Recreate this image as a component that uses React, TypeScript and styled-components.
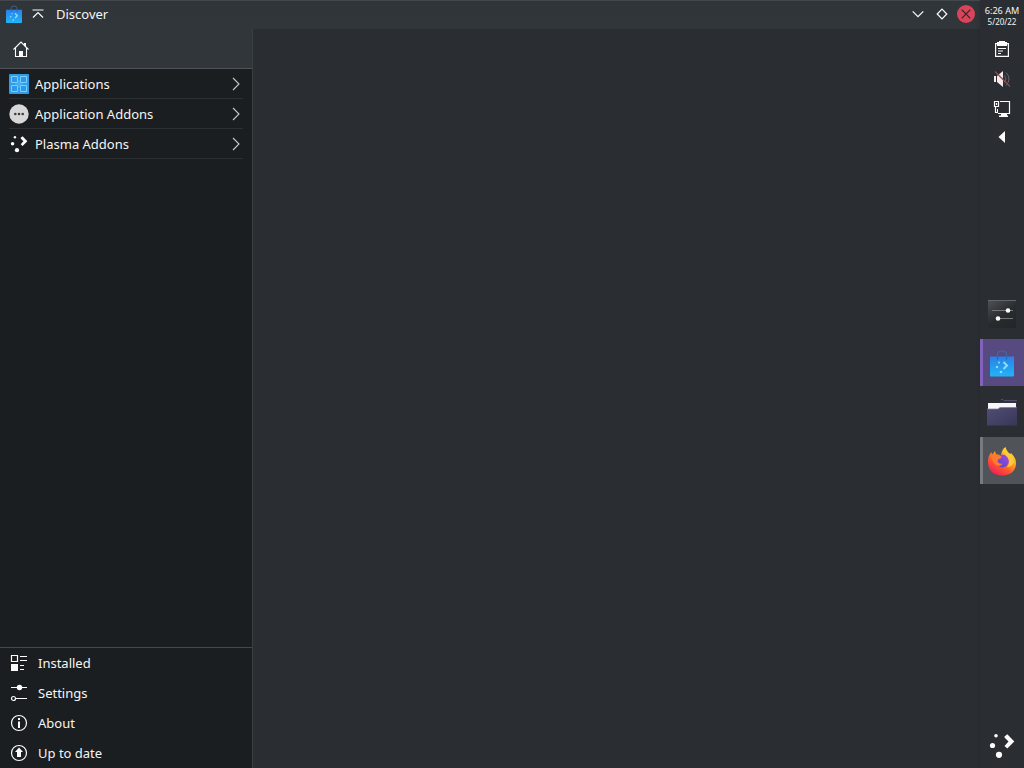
import type { ReactNode } from 'react';
import styled, { createGlobalStyle } from 'styled-components';

const CATEGORIES = [
  { label: 'Applications', icon: <ApplicationsIcon /> },
  { label: 'Application Addons', icon: <AddonsIcon /> },
  { label: 'Plasma Addons', icon: <PlasmaIcon size={19} /> },
];

const ACTIONS = [
  { label: 'Installed', icon: <InstalledIcon /> },
  { label: 'Settings', icon: <SettingsIcon /> },
  { label: 'About', icon: <AboutIcon /> },
  { label: 'Up to date', icon: <UpdateIcon /> },
];

const TASKS: { name: string; state: TaskState; icon: ReactNode }[] = [
  { name: 'settings', state: 'idle', icon: <SystemSettingsIcon /> },
  { name: 'discover', state: 'active', icon: <DiscoverIcon size={30} /> },
  { name: 'files', state: 'idle', icon: <FolderIcon /> },
  { name: 'firefox', state: 'running', icon: <FirefoxIcon /> },
];

type TaskState = 'idle' | 'running' | 'active';

const App = () => (
  <>
    <GlobalStyle />
    <Desktop>
      <Window>
        <TitleBar>
          <DiscoverIcon size={20} />
          <KeepAboveIcon />
          <Title>Discover</Title>
          <WindowButtons>
            <MinimizeIcon />
            <MaximizeIcon />
            <CloseIcon />
          </WindowButtons>
        </TitleBar>
        <WindowBody>
          <Sidebar>
            <SidebarHeader>
              <HomeIcon />
            </SidebarHeader>
            <CategoryList>
              {CATEGORIES.map(({ label, icon }) => (
                <CategoryItem key={label}>
                  {icon}
                  <CategoryLabel>{label}</CategoryLabel>
                  <ChevronIcon />
                </CategoryItem>
              ))}
            </CategoryList>
            <ActionList>
              {ACTIONS.map(({ label, icon }) => (
                <ActionItem key={label}>
                  {icon}
                  <span>{label}</span>
                </ActionItem>
              ))}
            </ActionList>
          </Sidebar>
          <Content />
        </WindowBody>
      </Window>
      <Panel>
        <Clock>
          <Time>6:26 AM</Time>
          <CalendarDate>5/20/22</CalendarDate>
        </Clock>
        <Tray>
          <ClipboardIcon />
          <VolumeIcon />
          <NetworkIcon />
          <ArrowIcon />
        </Tray>
        <TaskList>
          {TASKS.map(({ name, state, icon }) => (
            <Task key={name} $state={state}>
              {icon}
            </Task>
          ))}
        </TaskList>
        <Launcher>
          <PlasmaIcon size={28} />
        </Launcher>
      </Panel>
    </Desktop>
  </>
);

function DiscoverIcon({ size }: { size: number }) {
  return (
    <svg width={size} height={size} viewBox="0 0 30 30">
      <defs>
        <linearGradient id={`bag${size}`} x1="0" y1="0" x2="0" y2="1">
          <stop offset="0" stopColor="#2c7fe6" />
          <stop offset="1" stopColor="#20b5f6" />
        </linearGradient>
      </defs>
      <path d="M10.5 12V6.500q0-3.500 4.500-3.500t4.500 3.500V12" fill="none" stroke="#3b6c9b" strokeWidth="1.200" />
      <path d="M3 8.500h24v19q0 1-1 1H4q-1 0-1-1z" fill={`url(#bag${size})`} />
      <path d="M10.500 8.500v3M19.500 8.500v3" stroke="#2063b4" />
      <path d="M16.500 14l3.500 3.500-3.500 3.500" fill="none" stroke="#8bdcff" strokeWidth="2" />
      <g fill="#8bdcff">
        <circle cx="12" cy="14.500" r="1" />
        <circle cx="10" cy="19" r="1.200" />
        <circle cx="14" cy="24" r="1.300" />
      </g>
    </svg>
  );
}

function KeepAboveIcon() {
  return (
    <LineIcon width="12" height="10" viewBox="0 0 12 10">
      <path d="M.5 1h11M1 8.500L6 3.500l5 5" />
    </LineIcon>
  );
}

function MinimizeIcon() {
  return (
    <LineIcon width="12" height="8" viewBox="0 0 12 8">
      <path d="M.7 1.300L6 6.600l5.300-5.300" />
    </LineIcon>
  );
}

function MaximizeIcon() {
  return (
    <LineIcon width="12" height="12" viewBox="0 0 12 12">
      <path d="M6 1.200L10.800 6 6 10.800 1.200 6z" />
    </LineIcon>
  );
}

function CloseIcon() {
  return (
    <svg width="18" height="18" viewBox="0 0 18 18">
      <circle cx="9" cy="9" r="9" fill="#da4459" />
      <path d="M4.700 4.700l8.600 8.600M13.300 4.700l-8.600 8.600" stroke="#30252b" strokeWidth="1.200" />
    </svg>
  );
}

function HomeIcon() {
  return (
    <svg width="16" height="16" viewBox="0 0 16 16">
      <path d="M.5 8.500L8 1l7.500 7.500M2.500 7v8.500h11V7" fill="none" stroke="#fcfcfc" strokeWidth="1.100" />
      <path d="M6 10h4v6H6zM11 2h2v4.500l-2-2z" fill="#fcfcfc" />
    </svg>
  );
}

function ApplicationsIcon() {
  return (
    <svg width="20" height="20" viewBox="0 0 20 20">
      <rect width="20" height="20" rx="1" fill="#329be8" />
      <path
        d="M2.500 2.500h6v6h-6zM11.500 2.500h6v6h-6zM2.500 11.500h6v6h-6zM11.500 11.500h6v6h-6z"
        fill="#2e98e6"
        stroke="#79d0ff"
      />
      <path d="M6 10h8M10 6v8" stroke="#4eb8f6" />
    </svg>
  );
}

function AddonsIcon() {
  return (
    <svg width="20" height="20" viewBox="0 0 20 20">
      <circle cx="10" cy="10" r="9.700" fill="#d7d7d7" />
      <g fill="#3b3e41">
        <circle cx="6.300" cy="10" r="1.300" />
        <circle cx="10" cy="10" r="1.300" />
        <circle cx="13.700" cy="10" r="1.300" />
      </g>
    </svg>
  );
}

function PlasmaIcon({ size }: { size: number }) {
  return (
    <svg width={size} height={size} viewBox="0 0 28 28">
      <path d="M16.500 5.500l2.800-2.300 7 7.300-7 7-2.800-2.500 4-4.500-4-4z" fill="#fcfcfc" />
      <g fill="#fcfcfc">
        <circle cx="8" cy="4.800" r="1.800" />
        <circle cx="4.500" cy="14.500" r="2.600" />
        <circle cx="11" cy="23.800" r="3.100" />
      </g>
    </svg>
  );
}

function ChevronIcon() {
  return (
    <svg width="8" height="14" viewBox="0 0 8 14">
      <path d="M1 1l6 6-6 6" fill="none" stroke="#c8cacb" strokeWidth="1.100" />
    </svg>
  );
}

function InstalledIcon() {
  return (
    <svg width="18" height="18" viewBox="0 0 18 18">
      <path
        d="M1.500 1.500h6v6h-6zM10 2.500h7M10 6.500h7M10 11.500h4M10 15.500h4"
        fill="none"
        stroke="#fcfcfc"
        strokeWidth="1.200"
      />
      <path d="M1 10h7v7H1z" fill="#fcfcfc" />
    </svg>
  );
}

function SettingsIcon() {
  return (
    <svg width="18" height="18" viewBox="0 0 18 18">
      <path d="M1 3.500h16M5.500 14.500H17" stroke="#fcfcfc" strokeWidth="1.200" />
      <circle cx="9.500" cy="3.500" r="2.700" fill="#fcfcfc" />
      <circle cx="3.500" cy="14.500" r="2" fill="none" stroke="#fcfcfc" strokeWidth="1.200" />
    </svg>
  );
}

function AboutIcon() {
  return (
    <svg width="18" height="18" viewBox="0 0 18 18">
      <circle cx="9" cy="9" r="7.500" fill="none" stroke="#fcfcfc" strokeWidth="1.200" />
      <path d="M8 4h2v2H8zM8 7.500h2V14H8z" fill="#fcfcfc" />
    </svg>
  );
}

function UpdateIcon() {
  return (
    <svg width="18" height="18" viewBox="0 0 18 18">
      <circle cx="9" cy="9" r="7.500" fill="none" stroke="#fcfcfc" strokeWidth="1.200" />
      <path d="M9 3.500l4 4.500h-2v5H7V8H5z" fill="#fcfcfc" />
    </svg>
  );
}

function ClipboardIcon() {
  return (
    <svg width="16" height="18" viewBox="0 0 16 18">
      <path d="M1.600 3.600h12.800v12.800H1.600z" fill="none" stroke="#fcfcfc" strokeWidth="1.200" />
      <path d="M3 2h2V1h6v1h2v4H3zM4 8h8v1H4zM4 10.500h5v1H4zM4 13h3v1H4z" fill="#fcfcfc" />
    </svg>
  );
}

function VolumeIcon() {
  return (
    <svg width="18" height="18" viewBox="0 0 18 18">
      <path d="M1 6h2v6H1zM4 6l6-5v16l-6-5z" fill="#f6e9e9" />
      <path d="M11.500 5.500q3 3.500 0 7M13 2.500q6 6.500 0 13" fill="none" stroke="#65686a" />
      <path d="M2 1.500l15 15" stroke="#8c4a4e" strokeWidth="1.200" />
    </svg>
  );
}

function NetworkIcon() {
  return (
    <svg width="18" height="18" viewBox="0 0 18 18">
      <path d="M7 1.500h9.500v12H5" fill="none" stroke="#fcfcfc" strokeWidth="1.200" />
      <path d="M1.500 1.500h4v5h-4zM3.500 3v2M2.500 6.500v6H5" fill="none" stroke="#fcfcfc" strokeWidth="1.200" />
      <path d="M4.500 9v4" stroke="#fcfcfc" />
      <path d="M8 13h6v2.500h1V17H6v-1.500h2z" fill="#fcfcfc" />
    </svg>
  );
}

function ArrowIcon() {
  return (
    <svg width="18" height="18" viewBox="0 0 18 18">
      <path d="M12 3v12L5.500 9z" fill="#fcfcfc" />
    </svg>
  );
}

function SystemSettingsIcon() {
  return (
    <svg width="28" height="28" viewBox="0 0 28 28">
      <defs>
        <linearGradient id="tile" x1="0" y1="0" x2=".7" y2="1">
          <stop offset="0" stopColor="#505356" />
          <stop offset=".6" stopColor="#292c2e" />
          <stop offset="1" stopColor="#24272a" />
        </linearGradient>
      </defs>
      <path d="M0 0h28v28H0z" fill="url(#tile)" />
      <path d="M0 .5h28" stroke="#64676a" />
      <path d="M4 10.500h21M9 18.500h16" stroke="#74777a" />
      <circle cx="20" cy="10.500" r="2.300" fill="#fcfcfc" />
      <circle cx="10" cy="18.500" r="2.300" fill="#fcfcfc" />
    </svg>
  );
}

function FolderIcon() {
  return (
    <svg width="30" height="30" viewBox="0 0 30 30">
      <defs>
        <linearGradient id="folder" x1="0" y1="0" x2="1" y2="1">
          <stop offset="0" stopColor="#504d75" />
          <stop offset="1" stopColor="#383757" />
        </linearGradient>
      </defs>
      <path d="M14 3.500h16V9H14z" fill="#303144" />
      <path d="M14 2.500h2l1 1h13" fill="none" stroke="#4f5060" />
      <path d="M1 6h28v8H1z" fill="#f7f7fa" />
      <path d="M0 12h11l2-1.500h17v18H0z" fill="url(#folder)" />
      <path d="M0 12h11l2-1.500h17" fill="none" stroke="#7b769c" strokeWidth=".7" />
    </svg>
  );
}

function FirefoxIcon() {
  return (
    <svg width="30" height="30" viewBox="0 0 30 30">
      <defs>
        <linearGradient id="fire" x1=".85" y1="0" x2=".2" y2="1">
          <stop offset="0" stopColor="#fff04a" />
          <stop offset=".35" stopColor="#ffae25" />
          <stop offset=".65" stopColor="#ff572d" />
          <stop offset="1" stopColor="#ef1661" />
        </linearGradient>
        <linearGradient id="globe" x1="1" y1="0" x2="0" y2="1">
          <stop offset="0" stopColor="#a44be9" />
          <stop offset="1" stopColor="#5147bf" />
        </linearGradient>
      </defs>
      <path
        d="M18.500 1q1 4.500 5 7l.5-1q5.500 5.500 5 11-1 11-14 11.500Q2 29 1 17 .6 10 4.500 6L5 9l3-4 1 3.500 5 .5q1-6 4.500-8z"
        fill="url(#fire)"
      />
      <circle cx="15.500" cy="15" r="6.500" fill="url(#globe)" />
      <path d="M4 9q5-2 7 0l3.500 1.500q0 2-3 2.500l-1 2.500q2 3 5.500 2-2 3.500-6 2Q5 17 4 9z" fill="#ff792e" />
      <path d="M17 4q0 4 4 8 2.500 5-1 9 5 0 7-5-1-5-4-7.500Q19 6 18.500 2z" fill="#ffc936" />
    </svg>
  );
}

const GlobalStyle = createGlobalStyle`
  body {
    margin: 0;
    background-color: #2a2e32;
    color: #f4f5f5;
    font-family: 'Noto Sans', sans-serif;
    font-size: 13px;
  }

  svg {
    display: block;
    flex-shrink: 0;
  }

  ul {
    margin: 0;
    padding: 0;
    list-style: none;
  }
`;

const LineIcon = styled.svg`
  fill: none;
  stroke: #fcfcfc;
  stroke-width: 1.2px;
`;

const Desktop = styled.div`
  display: flex;
  height: 100vh;
  overflow: hidden;
`;

const Window = styled.div`
  display: flex;
  flex: 1;
  flex-direction: column;
`;

const TitleBar = styled.header`
  display: flex;
  box-sizing: border-box;
  height: 29px;
  align-items: center;
  padding: 0 5px 2px 4px;
  border-top: 1px solid #43484c;
  background: linear-gradient(#30353a, #31363b);

  & > svg:nth-child(2) {
    margin-left: 8px;
  }
`;

const Title = styled.span`
  margin-left: 12px;
`;

const WindowButtons = styled.div`
  display: flex;
  align-items: center;
  gap: 12px;
  margin-left: auto;

  & > svg:last-child {
    margin-left: -3px;
  }
`;

const WindowBody = styled.div`
  display: flex;
  flex: 1;
`;

const Sidebar = styled.aside`
  display: flex;
  box-sizing: border-box;
  width: 253px;
  flex-direction: column;
  border-right: 1px solid #3a3e41;
  background-color: #1b1e20;
`;

const SidebarHeader = styled.div`
  box-sizing: border-box;
  height: 40px;
  padding: 12px 13px;
  border-bottom: 1px solid #505459;
  background-color: #31363b;
`;

const CategoryList = styled.ul`
  flex: 1;
`;

const CategoryItem = styled.li`
  display: flex;
  box-sizing: border-box;
  height: 30px;
  align-items: center;
  margin: 0 9px;
  padding-right: 3px;
  border-bottom: 1px solid #2d3032;

  & > svg:first-child {
    width: 20px;
  }
`;

const CategoryLabel = styled.span`
  flex: 1;
  margin-left: 6px;
`;

const ActionList = styled.ul`
  border-top: 1px solid #45484a;
`;

const ActionItem = styled.li`
  display: flex;
  height: 30px;
  align-items: center;
  gap: 10px;
  padding-left: 10px;
`;

const Content = styled.main`
  flex: 1;
  background-color: #2a2e32;
`;

const Panel = styled.aside`
  display: flex;
  width: 44px;
  flex-direction: column;
  background-color: #2a2e32;
  box-shadow: 0 0 5px rgba(0, 0, 0, 0.15);
`;

const Clock = styled.div`
  height: 36px;
  padding-top: 4px;
  box-sizing: border-box;
  margin-bottom: 4px;
  text-align: center;
  white-space: nowrap;
`;

const Time = styled.div`
  font-size: 9.1px;
  line-height: 14px;
`;

const CalendarDate = styled.div`
  font-size: 8px;
  line-height: 8px;
`;

const Tray = styled.div`
  display: flex;
  height: 250px;
  flex-direction: column;
  align-items: center;
  gap: 12px;

  & > svg:last-child {
    margin-top: -2px;
  }
`;

const TaskList = styled.div`
  display: flex;
  flex-direction: column;
  gap: 2px;
`;

const TASK_COLORS = {
  idle: { background: 'transparent', edge: 'transparent' },
  running: { background: '#505357', edge: '#777b7f' },
  active: { background: '#574a80', edge: '#8163bd' },
};

const Task = styled.div<{ $state: TaskState }>`
  display: flex;
  box-sizing: border-box;
  height: 47px;
  align-items: center;
  justify-content: center;
  padding-right: 3px;
  border-left: 3px solid ${({ $state }) => TASK_COLORS[$state].edge};
  background-color: ${({ $state }) => TASK_COLORS[$state].background};
  background-clip: padding-box;
`;

const Launcher = styled.div`
  display: flex;
  justify-content: center;
  margin-top: auto;
  padding-bottom: 9px;
`;

export default App;
